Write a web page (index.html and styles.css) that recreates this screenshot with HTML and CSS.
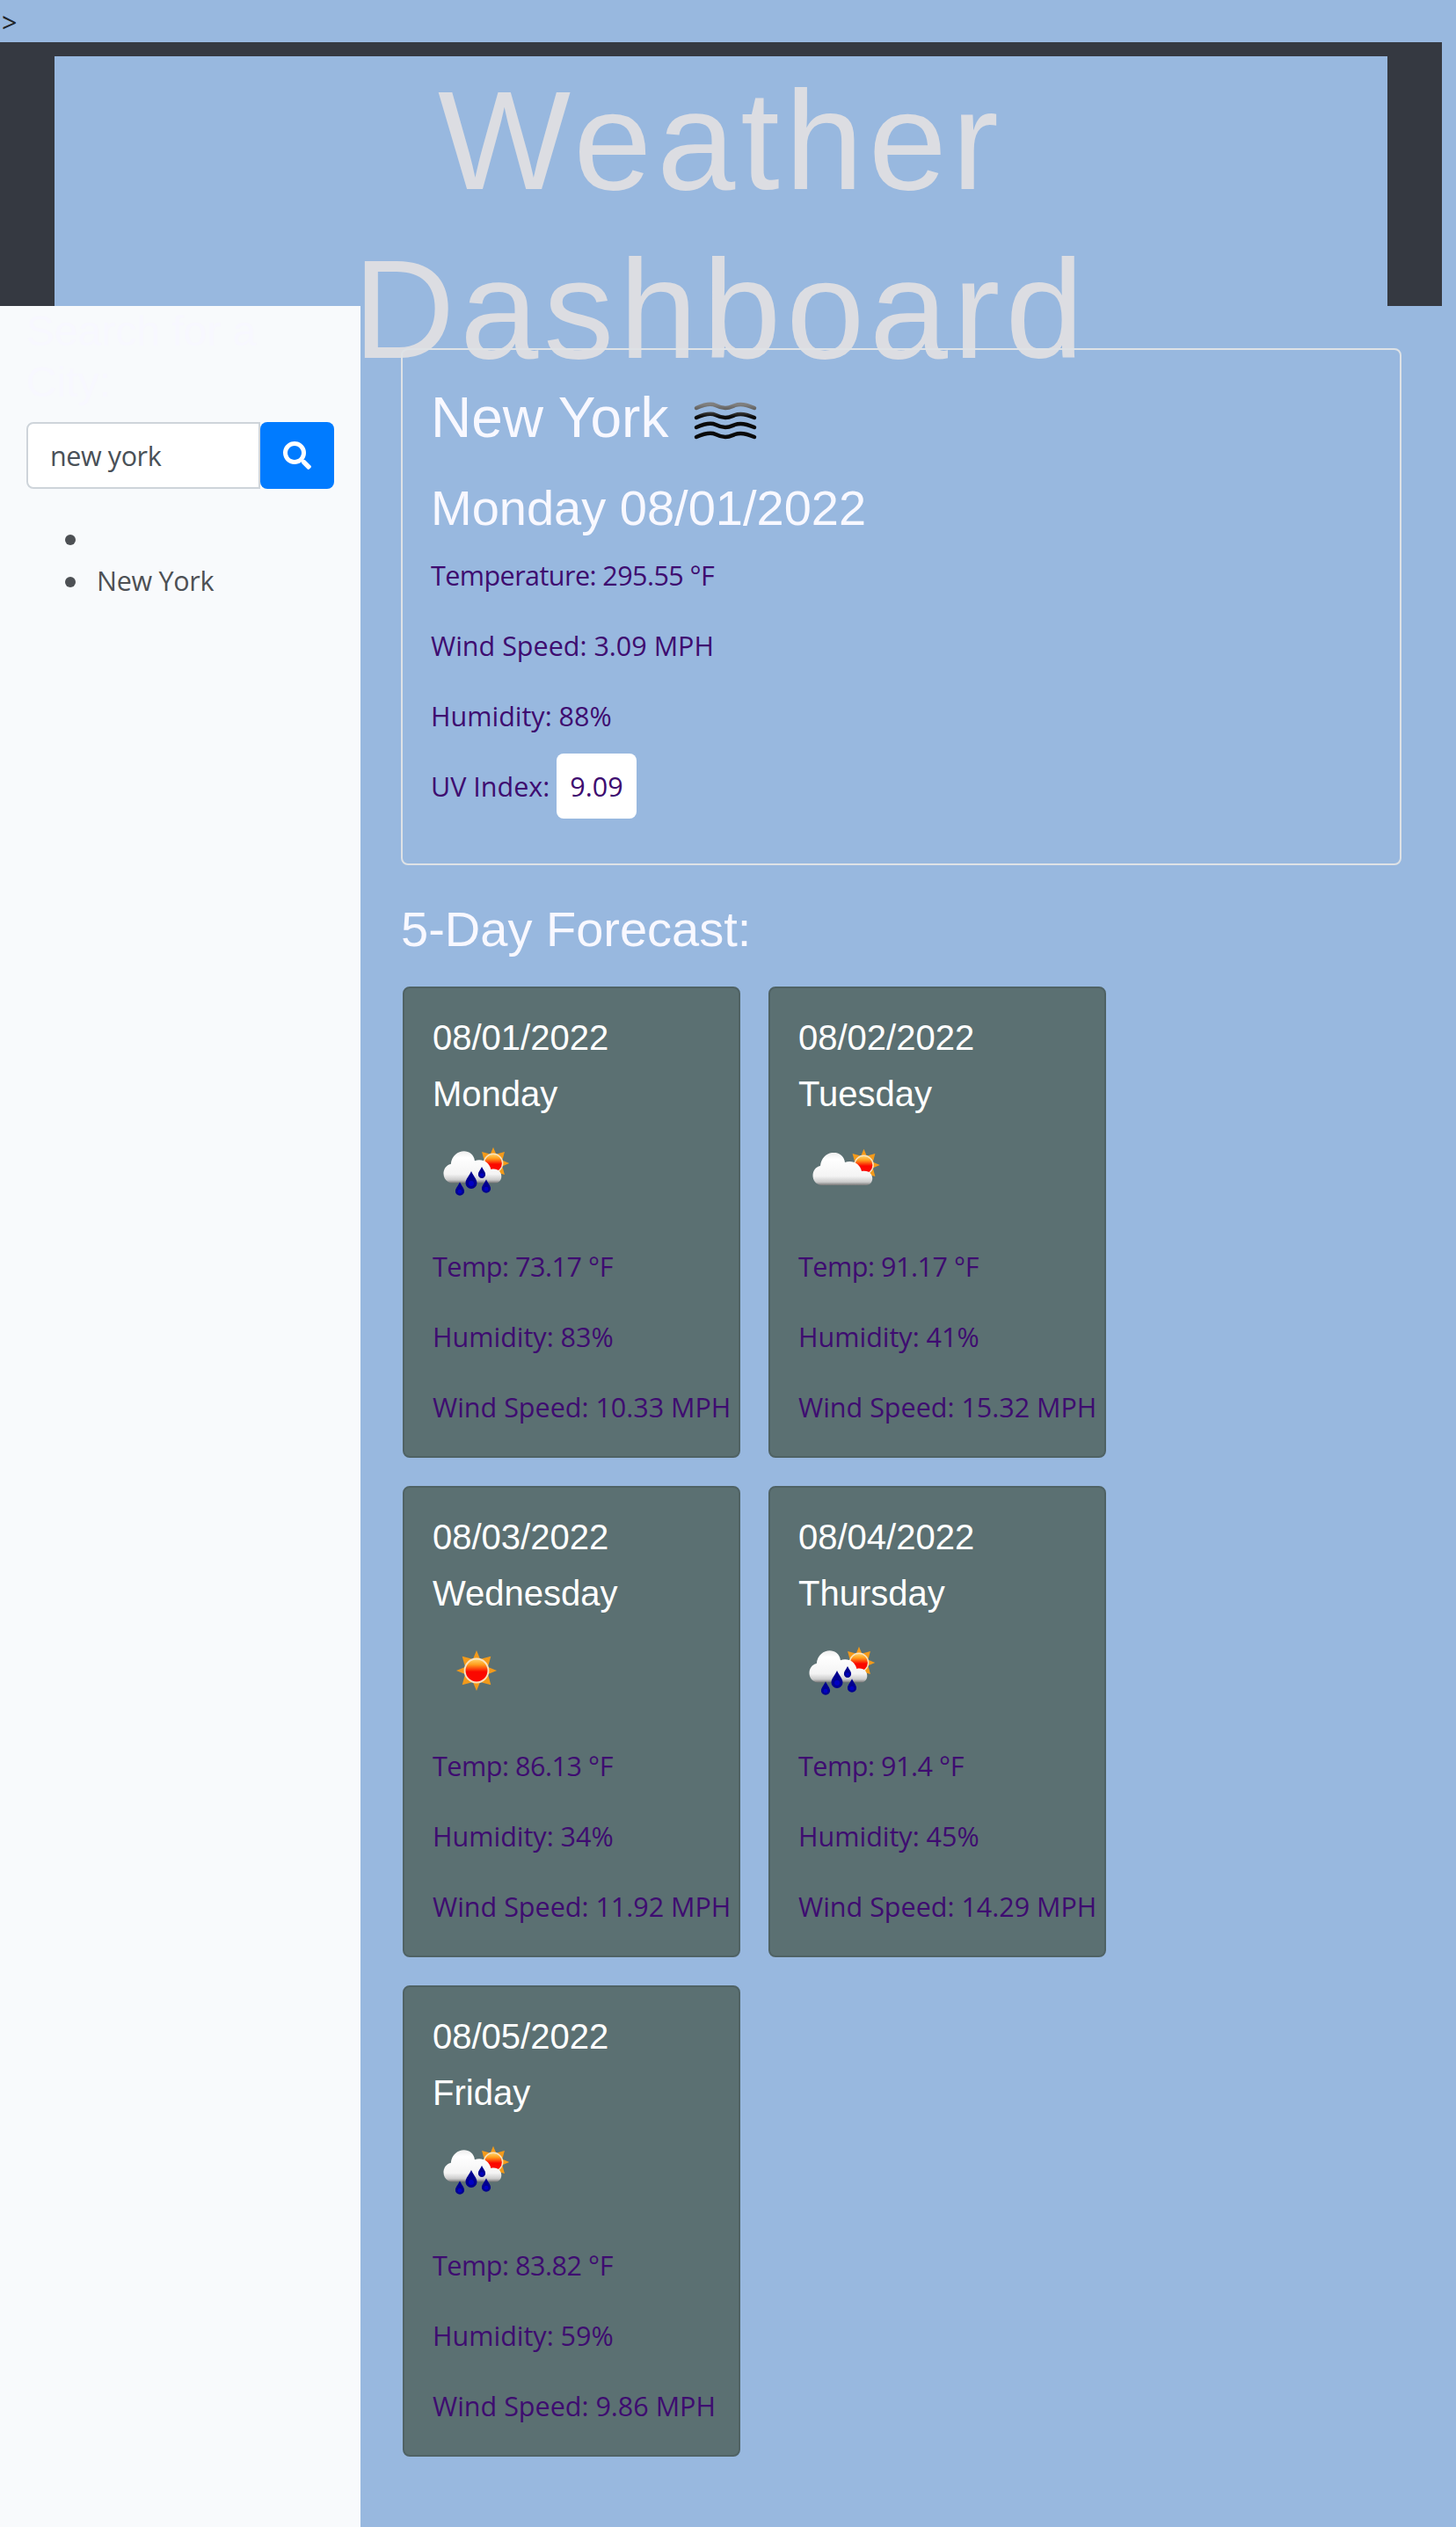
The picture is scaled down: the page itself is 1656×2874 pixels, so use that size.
FILE: index.html
```html
<!DOCTYPE html>
<html lang="en">
<head>
<meta charset="utf-8">
<title>Weather Dashboard</title>
<link rel="stylesheet" href="styles.css">
</head>
<body>
<svg class="sprite" aria-hidden="true">
  <defs>
    <linearGradient id="sunFill" x1="0" y1="0" x2="0" y2="1">
      <stop offset="0" stop-color="#ffd870"/><stop offset=".25" stop-color="#ff9c1c"/><stop offset=".55" stop-color="#fb0800"/><stop offset="1" stop-color="#fb0800"/>
    </linearGradient>
    <linearGradient id="cloudFill" x1="0" y1="0" x2="0" y2="1">
      <stop offset="0" stop-color="#eeeeee"/><stop offset=".2" stop-color="#ffffff"/><stop offset=".72" stop-color="#f4f4f4"/><stop offset=".9" stop-color="#cccccc"/><stop offset="1" stop-color="#777777"/>
    </linearGradient>
    <symbol id="sun" viewBox="-25 -25 50 50">
      <path fill="#f39a1a" d="M0-24 4.500-13-4.500-13ZM17-17 14-6 6-14ZM24 0 13 4.500 13-4.500ZM17 17 6 14 14 6ZM0 24-4.500 13 4.500 13ZM-17 17-14 6-6 14ZM-24 0-13-4.500-13 4.500ZM-17-17-6-14-14-6Z"/>
      <circle r="14" fill="url(#sunFill)" stroke="#fbe3bd" stroke-width="2"/>
    </symbol>
    <symbol id="cloud" viewBox="0 0 70 38">
      <path fill="url(#cloudFill)" d="M10 37C-3 35-2 17 9 15C11-4 35-5 37 11C45 8 54 12 56 21C70 18 72 35 62 37Z"/>
    </symbol>
    <symbol id="drop" viewBox="0 0 14 20">
      <path fill="#00008f" d="M7 0C9 5 13.500 9 13.500 13.500A6.500 6.500 0 0 1 .5 13.500C.5 9 5 5 7 0Z"/>
      <circle cx="7" cy="14" r="3" fill="#0000c4"/>
    </symbol>
    <symbol id="sunny" viewBox="0 0 100 100"><use href="#sun" x="26" y="24" width="48" height="48"/></symbol>
    <symbol id="partly" viewBox="0 0 100 100">
      <use href="#sun" x="55.500" y="22" width="38" height="38"/>
      <use href="#cloud" x="16" y="27" width="70" height="38"/>
    </symbol>
    <symbol id="rain" viewBox="0 0 100 100">
      <use href="#sun" x="50" y="20" width="38" height="38"/>
      <use href="#cloud" x="12" y="25" width="68" height="38"/>
      <use href="#drop" x="37" y="48" width="14" height="20"/>
      <use href="#drop" x="51.500" y="43" width="9" height="13"/>
      <use href="#drop" x="25.500" y="60" width="11" height="16"/>
      <use href="#drop" x="55.500" y="57" width="11" height="16"/>
    </symbol>
  </defs>
</svg>

<div class="stray">&gt;</div>
<header class="header"><h1 class="title">Weather Dashboard</h1></header>
<div class="layout">
  <aside class="sidebar">
    <h3 class="sidebar-title">Search for a City:</h3>
    <div class="search">
      <input class="search-input" type="text" value="new york" aria-label="City">
      <button class="search-btn" aria-label="Search">
        <svg viewBox="0 0 512 512" width="32" height="32"><path fill="#fff" d="M505 442.700 405.300 343c-4.500-4.500-10.600-7-17-7H372c27.600-35.300 44-79.700 44-128C416 93.100 322.900 0 208 0S0 93.100 0 208s93.100 208 208 208c48.300 0 92.700-16.400 128-44v16.300c0 6.400 2.500 12.500 7 17l99.700 99.700c9.400 9.400 24.600 9.400 33.900 0l28.300-28.300c9.400-9.400 9.400-24.600.1-34zM208 336c-70.700 0-128-57.200-128-128 0-70.700 57.200-128 128-128 70.700 0 128 57.200 128 128 0 70.700-57.200 128-128 128z"/></svg>
      </button>
    </div>
    <ul class="history"><li></li><li>New York</li></ul>
  </aside>
  <main class="main">
    <section class="current">
      <div class="city-row">
        <h2 class="city">New York</h2>
        <svg class="mist" viewBox="0 0 100 100">
          <defs><linearGradient id="mistFade" gradientUnits="userSpaceOnUse" x1="0" y1="30" x2="0" y2="44"><stop offset="0" stop-color="#808080"/><stop offset=".4" stop-color="#606060"/><stop offset="1" stop-color="#0a0a0a"/></linearGradient></defs>
          <g fill="none" stroke="url(#mistFade)" stroke-width="4.500" stroke-linecap="round">
            <path d="M18 34C27 30 35 28.500 40 31S47 34 51 34S57 33 62 31S75 30 84 34"/>
            <path d="M18 45C27 41 35 39.500 40 42S47 45 51 45S57 44 62 42S75 41 84 45"/>
            <path d="M18 56C27 52 35 50.500 40 53S47 56 51 56S57 55 62 53S75 52 84 56"/>
            <path d="M18 67C27 63 35 61.500 40 64S47 67 51 67S57 66 62 64S75 63 84 67"/>
          </g>
        </svg>
      </div>
      <h3 class="date">Monday 08/01/2022</h3>
      <p class="stat temperature">Temperature: 295.55 °F</p>
      <p class="stat">Wind Speed: 3.09 MPH</p>
      <p class="stat">Humidity: 88%</p>
      <p class="stat">UV Index: <span class="uv">9.09</span></p>
    </section>
    <h3 class="forecast-title">5-Day Forecast:</h3>
    <section class="forecast">
      <article class="card"><h5>08/01/2022</h5><h5>Monday</h5><svg class="icon"><use href="#rain"/></svg><p class="temp">Temp: 73.17 °F</p><p>Humidity: 83%</p><p>Wind Speed: 10.33 MPH</p></article>
      <article class="card"><h5>08/02/2022</h5><h5>Tuesday</h5><svg class="icon"><use href="#partly"/></svg><p class="temp">Temp: 91.17 °F</p><p>Humidity: 41%</p><p>Wind Speed: 15.32 MPH</p></article>
      <article class="card"><h5>08/03/2022</h5><h5>Wednesday</h5><svg class="icon"><use href="#sunny"/></svg><p class="temp">Temp: 86.13 °F</p><p>Humidity: 34%</p><p>Wind Speed: 11.92 MPH</p></article>
      <article class="card"><h5>08/04/2022</h5><h5>Thursday</h5><svg class="icon"><use href="#rain"/></svg><p class="temp">Temp: 91.4 °F</p><p>Humidity: 45%</p><p>Wind Speed: 14.29 MPH</p></article>
      <article class="card"><h5>08/05/2022</h5><h5>Friday</h5><svg class="icon"><use href="#rain"/></svg><p class="temp">Temp: 83.82 °F</p><p>Humidity: 59%</p><p>Wind Speed: 9.86 MPH</p></article>
    </section>
  </main>
</div>
</body>
</html>
```
FILE: styles.css
```css
* { box-sizing: border-box; }
body {
  margin: 0;
  background: #98b8df;
  color: #212529;
  font: 400 30.5px/48px "Open Sans", "Noto Sans", sans-serif;
}
h1, h2, h3, h5, p, ul { margin: 0; }
h1, h2, h3, h5 {
  font-family: "Liberation Sans", Arial, sans-serif;
  font-weight: 400;
  line-height: 1.2;
}
.sprite { position: absolute; width: 0; height: 0; }
.stray { height: 48px; padding: 1px 0 0 2px; }
.header {
  width: 1640px;
  height: 300px;
  padding: 16px 62px 0;
  background: #353941;
}
.title {
  height: 284px;
  padding: 0 300px;
  background: #98b8df;
  color: #dcdde2;
  font-size: 160px;
  letter-spacing: 6px;
  text-align: center;
}
.layout { display: flex; width: 1640px; height: 2526px; }
.sidebar {
  flex: none;
  width: 410px;
  padding: 0 30px;
  background: #f8fafc;
}
.sidebar-title { height: 132px; font-size: 48px; color: #f8f8ff; }
.search { display: flex; width: 350px; height: 76px; }
.search-input {
  width: 266px;
  height: 76px;
  padding: 0 24px 0 25px;
  border: 2px solid #ced4da;
  border-radius: 8px 0 0 8px;
  background: #fff;
  color: #495057;
  font: inherit;
  letter-spacing: -.4px;
}
.search-btn {
  display: flex;
  align-items: center;
  justify-content: center;
  width: 84px;
  border: 0;
  border-radius: 8px;
  background: #007bff;
}
.history {
  padding: 32px 0 0 80px;
  color: #4d5054;
  letter-spacing: -.3px;
  list-style: none;
}
.history li { position: relative; height: 48px; }
.history li::before {
  content: "";
  position: absolute;
  top: 20px;
  left: -36px;
  width: 12px;
  height: 12px;
  border-radius: 50%;
  background: #4d5054;
}
.main { flex: 1; padding: 48px 46px 0; }
.current {
  height: 588px;
  padding: 32px 32px 0;
  border: 2px solid #dee2e6;
  border-radius: 8px;
}
.city-row { display: flex; align-items: center; height: 100px; gap: 14px; }
.city { margin-bottom: 9px; font-size: 64px; color: #f8f8ff; }
.mist { width: 100px; height: 100px; }
.date { height: 86px; margin-top: 14px; font-size: 56px; color: #f8f8ff; }
.stat { height: 80px; color: #3e0c70; }
.temperature { letter-spacing: -.55px; }
.uv {
  padding: 16px 15px;
  border-radius: 8px;
  background: #fff;
}
.forecast-title { margin: 39px 0 32px; font-size: 56px; color: #f8f8ff; }
.forecast {
  display: grid;
  grid-template-columns: 384px 384px;
  grid-auto-rows: 536px;
  gap: 32px;
  padding-left: 2px;
}
.card {
  padding: 32px;
  border: 2px solid #4f6264;
  border-radius: 8px;
  background: #5b7072;
  color: #3e0c70;
  white-space: nowrap;
}
.card h5 { height: 48px; margin-bottom: 16px; font-size: 40px; color: #fff; }
.card p { height: 80px; }
.card .temp { letter-spacing: -.45px; }
.icon { display: block; width: 100px; height: 100px; margin-bottom: 32px; }
```
